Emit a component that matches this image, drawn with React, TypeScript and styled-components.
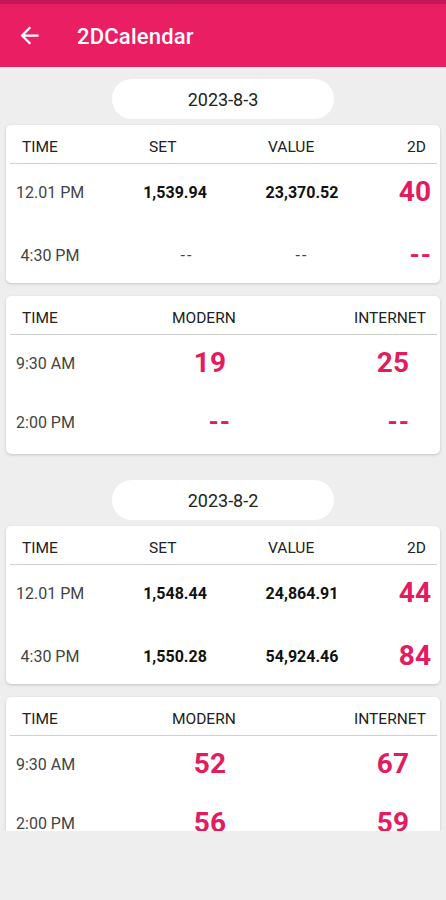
import React from 'react'
import styled, { createGlobalStyle } from 'styled-components'

const GlobalStyle = createGlobalStyle`
  html, body {
    margin: 0;
    padding: 0;
    background: #eeeeee;
  }
  body {
    font-family: Roboto, "Liberation Sans", Arial, sans-serif;
  }
`

const Page = styled.div`
  width: 446px;
  height: 900px;
  background: #eeeeee;
  display: flex;
  flex-direction: column;
  overflow: hidden;
`

const StatusStrip = styled.div`
  height: 4px;
  background: #c2185b;
`

const AppBar = styled.header`
  height: 63px;
  background: #e91e63;
  display: flex;
  align-items: center;
  padding-left: 16px;
`

const BackButton = styled.button`
  border: 0;
  background: none;
  padding: 0;
  display: flex;
  align-items: center;
  color: #fff;
  margin-top: -1px;
`

const Title = styled.h1`
  margin: 2px 0 0 34px;
  font-size: 22px;
  font-weight: 500;
  color: #fff;
  line-height: 1;
  letter-spacing: 0.2px;
`

const Scroller = styled.main`
  height: 764px;
  overflow: hidden;
`

const Section = styled.section`
  display: flex;
  flex-direction: column;
  align-items: center;
  padding: 12px 6px 14px;
`

const DatePill = styled.div`
  width: 222px;
  height: 40px;
  border-radius: 20px;
  background: #fff;
  display: flex;
  align-items: center;
  justify-content: center;
  font-size: 18px;
  color: #222;
  margin-bottom: 6px;
`

const Card = styled.div`
  align-self: stretch;
  background: #fff;
  border-radius: 5px;
  box-shadow: 0 1px 3px rgba(0, 0, 0, 0.18);
  padding: 0 3px 0 4px;
  & + & {
    margin-top: 13px;
  }
`

const Grid = styled.div<{ $cols: string }>`
  display: grid;
  grid-template-columns: ${p => p.$cols};
  padding: 0 6px;
`

const HeadRow = styled(Grid)`
  padding-top: 13px;
  padding-bottom: 7px;
  line-height: 18px;
  border-bottom: 1.5px solid #cfcfcf;
`

const Rows = styled.div<{ $tight?: boolean }>`
  display: flex;
  flex-direction: column;
  gap: ${p => (p.$tight ? 3 : 7)}px;
  padding-bottom: ${p => (p.$tight ? 4 : 0)}px;
`

const DataRow = styled(Grid)`
  height: 56px;
  align-items: center;
`

const HeadCell = styled.div<{ $indent?: number; $end?: boolean }>`
  font-size: 15.5px;
  color: #222;
  padding-left: ${p => p.$indent ?? 0}px;
  padding-right: ${p => (p.$end ? 5 : 0)}px;
  text-align: ${p => (p.$end ? 'right' : 'left')};
`

const TimeCell = styled.div<{ $span: number }>`
  font-size: 16px;
  color: #444;
  min-width: ${p => p.$span}px;
  justify-self: start;
  text-align: center;
`

const FigureCell = styled.div<{ $empty?: boolean; $shift?: number }>`
  font-size: 16px;
  font-weight: ${p => (p.$empty ? 400 : 700)};
  color: ${p => (p.$empty ? '#444' : '#111')};
  letter-spacing: ${p => (p.$empty ? '2px' : '0')};
  padding-left: ${p => (p.$empty ? (p.$shift ?? 0) * 2 : 0)}px;
  text-align: center;
`

const ResultCell = styled.div<{ $inset?: number; $empty?: boolean }>`
  font-size: ${p => (p.$empty ? 26 : 28)}px;
  font-weight: 700;
  color: #e31b5f;
  text-align: right;
  padding-right: ${p => p.$inset ?? 0}px;
  margin-right: ${p => (p.$empty ? -1 : 0)}px;
  line-height: 1;
  letter-spacing: ${p => (p.$empty ? '1px' : '0')};
`

type Session = { time: string; set: string; value: string; twoD: string }
type Draw = { time: string; modern: string; internet: string }
type Day = { date: string; sessions: Session[]; draws: Draw[] }

const days: Day[] = [
  {
    date: '2023-8-3',
    sessions: [
      { time: '12.01 PM', set: '1,539.94', value: '23,370.52', twoD: '40' },
      { time: '4:30 PM', set: '--', value: '--', twoD: '--' },
    ],
    draws: [
      { time: '9:30 AM', modern: '19', internet: '25' },
      { time: '2:00 PM', modern: '--', internet: '--' },
    ],
  },
  {
    date: '2023-8-2',
    sessions: [
      { time: '12.01 PM', set: '1,548.44', value: '24,864.91', twoD: '44' },
      { time: '4:30 PM', set: '1,550.28', value: '54,924.46', twoD: '84' },
    ],
    draws: [
      { time: '9:30 AM', modern: '52', internet: '67' },
      { time: '2:00 PM', modern: '56', internet: '59' },
    ],
  },
]

const setCols = '104px 110px 144px 1fr'
const drawCols = '140px 110px 1fr'

function ArrowBack() {
  return (
    <svg width="27" height="27" viewBox="0 0 24 24" fill="currentColor">
      <path d="M20 11H7.83l5.59-5.59L12 4l-8 8 8 8 1.41-1.41L7.83 13H20v-2z" />
    </svg>
  )
}

function SessionCard({ sessions }: { sessions: Session[] }) {
  return (
    <Card>
      <HeadRow $cols={setCols}>
        <HeadCell $indent={6}>TIME</HeadCell>
        <HeadCell $indent={29}>SET</HeadCell>
        <HeadCell $indent={38}>VALUE</HeadCell>
        <HeadCell $end>2D</HeadCell>
      </HeadRow>
      <Rows>
        {sessions.map(s => (
          <DataRow $cols={setCols} key={s.time}>
            <TimeCell $span={68}>{s.time}</TimeCell>
            <FigureCell $empty={s.set === '--'} $shift={12}>{s.set}</FigureCell>
            <FigureCell $empty={s.value === '--'}>{s.value}</FigureCell>
            <ResultCell $empty={s.twoD === '--'}>{s.twoD}</ResultCell>
          </DataRow>
        ))}
      </Rows>
    </Card>
  )
}

function DrawCard({ draws }: { draws: Draw[] }) {
  return (
    <Card>
      <HeadRow $cols={drawCols}>
        <HeadCell $indent={6}>TIME</HeadCell>
        <HeadCell $indent={16}>MODERN</HeadCell>
        <HeadCell $end>INTERNET</HeadCell>
      </HeadRow>
      <Rows $tight>
        {draws.map(d => (
          <DataRow $cols={drawCols} key={d.time}>
            <TimeCell $span={59}>{d.time}</TimeCell>
            <ResultCell $inset={d.modern === '--' ? 36 : 40} $empty={d.modern === '--'}>{d.modern}</ResultCell>
            <ResultCell $inset={22} $empty={d.internet === '--'}>{d.internet}</ResultCell>
          </DataRow>
        ))}
      </Rows>
    </Card>
  )
}

export default function App() {
  return (
    <>
      <GlobalStyle />
      <Page>
        <StatusStrip />
        <AppBar>
          <BackButton aria-label="Back">
            <ArrowBack />
          </BackButton>
          <Title>2DCalendar</Title>
        </AppBar>
        <Scroller>
          {days.map(day => (
            <Section key={day.date}>
              <DatePill>{day.date}</DatePill>
              <SessionCard sessions={day.sessions} />
              <DrawCard draws={day.draws} />
            </Section>
          ))}
        </Scroller>
      </Page>
    </>
  )
}
